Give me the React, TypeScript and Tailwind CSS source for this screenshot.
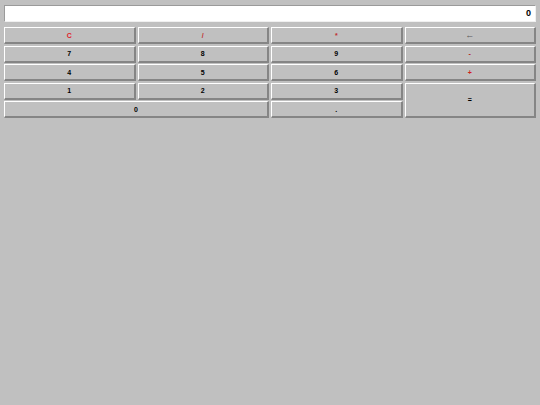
const keys: { label: string; color: string; span?: string; size?: string }[] = [
  { label: 'C', color: 'text-[#e0202a]' },
  { label: '/', color: 'text-[#c03030]' },
  { label: '*', color: 'text-[#c03030]' },
  { label: '←', color: 'text-[#5a5a5a]', size: 'text-[9px]' },
  { label: '7', color: 'text-black' },
  { label: '8', color: 'text-black' },
  { label: '9', color: 'text-black' },
  { label: '-', color: 'text-[#b02020]' },
  { label: '4', color: 'text-black' },
  { label: '5', color: 'text-black' },
  { label: '6', color: 'text-black' },
  { label: '+', color: 'text-[#d02020]' },
  { label: '1', color: 'text-black' },
  { label: '2', color: 'text-black' },
  { label: '3', color: 'text-black' },
  { label: '=', color: 'text-black', span: 'row-span-2' },
  { label: '0', color: 'text-black', span: 'col-span-2' },
  { label: '.', color: 'text-black' },
];

export default function App() {
  return (
    <div
      className="w-[540px] h-[405px] bg-[#c0c0c0] px-[4px] pt-[5px]"
      style={{ fontFamily: '"Liberation Sans", Arial, sans-serif' }}
    >
      <div className="h-[17px] bg-white border-t-[1.5px] border-l-[1.5px] border-b border-r border-t-[#9a9a9a] border-l-[#9a9a9a] border-b-[#f0f0f0] border-r-[#f0f0f0] flex items-center justify-end pr-[4px] text-[9px] font-bold text-black">
        0
      </div>
      <div className="mt-[5px] grid grid-cols-4 grid-rows-[repeat(5,17px)] gap-x-[2px] gap-y-[1.5px]">
        {keys.map((k) => (
          <button
            key={k.label}
            className={`${k.span ?? ''} ${k.color} ${k.size ?? 'text-[7px]'} bg-[#c0c0c0] border-t-[1.5px] border-l-[1.5px] border-b-2 border-r-2 border-t-white border-l-white border-b-[#858585] border-r-[#858585] flex items-center justify-center font-bold leading-none`}
          >
            {k.label}
          </button>
        ))}
      </div>
    </div>
  );
}
